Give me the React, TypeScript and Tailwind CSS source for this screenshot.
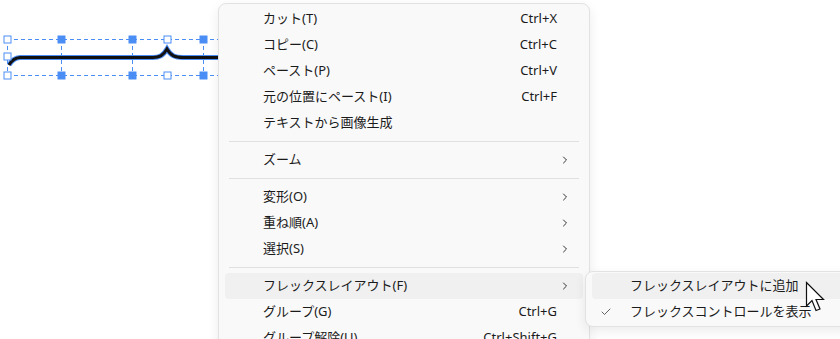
import { ChevronRight, Check } from "lucide-react"

type Item = { label: string; shortcut?: string; sub?: boolean; active?: boolean } | "sep"

const items: Item[] = [
  { label: "カット(T)", shortcut: "Ctrl+X" },
  { label: "コピー(C)", shortcut: "Ctrl+C" },
  { label: "ペースト(P)", shortcut: "Ctrl+V" },
  { label: "元の位置にペースト(I)", shortcut: "Ctrl+F" },
  { label: "テキストから画像生成" },
  "sep",
  { label: "ズーム", sub: true },
  "sep",
  { label: "変形(O)", sub: true },
  { label: "重ね順(A)", sub: true },
  { label: "選択(S)", sub: true },
  "sep",
  { label: "フレックスレイアウト(F)", sub: true, active: true },
  { label: "グループ(G)", shortcut: "Ctrl+G" },
  { label: "グループ解除(U)", shortcut: "Ctrl+Shift+G" },
]

const font = { fontFamily: '"Segoe UI", "Noto Sans", "Noto Sans CJK JP", sans-serif' }

function Handle({ x, y, filled }: { x: number; y: number; filled?: boolean }) {
  return (
    <rect
      x={x - 3.5}
      y={y - 3.5}
      width={7}
      height={7}
      fill={filled ? "#4a8ef5" : "#ffffff"}
      stroke="#4a8ef5"
      strokeWidth={1}
    />
  )
}

function Canvas() {
  return (
    <svg className="absolute left-0 top-0" width={230} height={100}>
      <g stroke="#4a8ef5" strokeWidth={1} strokeDasharray="4 3" fill="none">
        <line x1={7} y1={39.5} x2={230} y2={39.5} />
        <line x1={7} y1={75.5} x2={230} y2={75.5} />
        <line x1={7.5} y1={39} x2={7.5} y2={75} />
        <line x1={61.5} y1={39} x2={61.5} y2={75} />
        <line x1={132.5} y1={39} x2={132.5} y2={75} />
        <line x1={203.5} y1={39} x2={203.5} y2={75} />
      </g>
      <path
        d="M9,65 Q13,58 20,57.5 L153,57.5 C159,57.5 163,56 167,49 C171,56 175,57.5 183,57.5 L230,57.5"
        stroke="#4a8ef5"
        strokeWidth={5}
        fill="none"
      />
      <path
        d="M9,65 Q13,58 20,57.5 L153,57.5 C159,57.5 163,56 167,49 C171,56 175,57.5 183,57.5 L230,57.5"
        stroke="#111111"
        strokeWidth={3}
        fill="none"
      />
      <Handle x={7.5} y={39.5} />
      <Handle x={61.5} y={39.5} filled />
      <Handle x={132.5} y={39.5} filled />
      <Handle x={167.5} y={39.5} />
      <Handle x={203.5} y={39.5} filled />
      <Handle x={7.5} y={56.5} />
      <Handle x={7.5} y={75.5} />
      <Handle x={61.5} y={75.5} filled />
      <Handle x={132.5} y={75.5} filled />
      <Handle x={167.5} y={75.5} />
      <Handle x={203.5} y={75.5} filled />
    </svg>
  )
}

function Cursor() {
  return (
    <svg className="absolute left-[805px] top-[281px]" width={24} height={34} viewBox="0 0 24 34">
      <path
        d="M1.5,1.5 L1.5,25 L7,19.5 L11,29.5 L15,28 L11,18.5 L18.5,18.5 Z"
        fill="#ffffff"
        stroke="#111111"
        strokeWidth={1.2}
        strokeLinejoin="miter"
      />
    </svg>
  )
}

export default function App() {
  return (
    <div className="relative w-[840px] h-[339px] bg-white overflow-hidden text-[13px] text-[#1b1b1b]" style={font}>
      <Canvas />

      <div className="absolute left-[218px] top-[3px] w-[372px] pt-[2px] pb-2 bg-[#f9f9f9] border border-[#e2e2e2] rounded-lg shadow-[0_4px_12px_rgba(0,0,0,0.08)]">
        {items.map((it, i) =>
          it === "sep" ? (
            <div key={i} className="mx-[10px] my-[5px] h-px bg-[#e0e0e0]" />
          ) : (
            <div
              key={i}
              className={`mx-[6px] h-[26px] flex items-center pl-[38px] pr-[12px] rounded ${
                it.active ? "bg-[#f0f0f0]" : ""
              }`}
            >
              <span className="flex-1 whitespace-nowrap">{it.label}</span>
              {it.shortcut && <span className="mr-[14px] whitespace-nowrap">{it.shortcut}</span>}
              {it.sub && <ChevronRight className="w-[12px] h-[12px] text-[#333]" strokeWidth={2} />}
            </div>
          )
        )}
      </div>

      <div className="absolute left-[585px] top-[271px] w-[300px] py-px bg-[#f9f9f9] border border-[#e2e2e2] rounded-lg shadow-[0_4px_12px_rgba(0,0,0,0.08)]">
        <div className="mx-[6px] h-[26px] flex items-center pl-[38px] rounded bg-[#f0f0f0]">
          <span className="whitespace-nowrap">フレックスレイアウトに追加</span>
        </div>
        <div className="relative mx-[6px] h-[26px] flex items-center pl-[38px] rounded">
          <Check className="absolute left-[8px] w-[12px] h-[12px] text-[#333]" strokeWidth={1.5} />
          <span className="whitespace-nowrap">フレックスコントロールを表示</span>
        </div>
      </div>

      <Cursor />
    </div>
  )
}
